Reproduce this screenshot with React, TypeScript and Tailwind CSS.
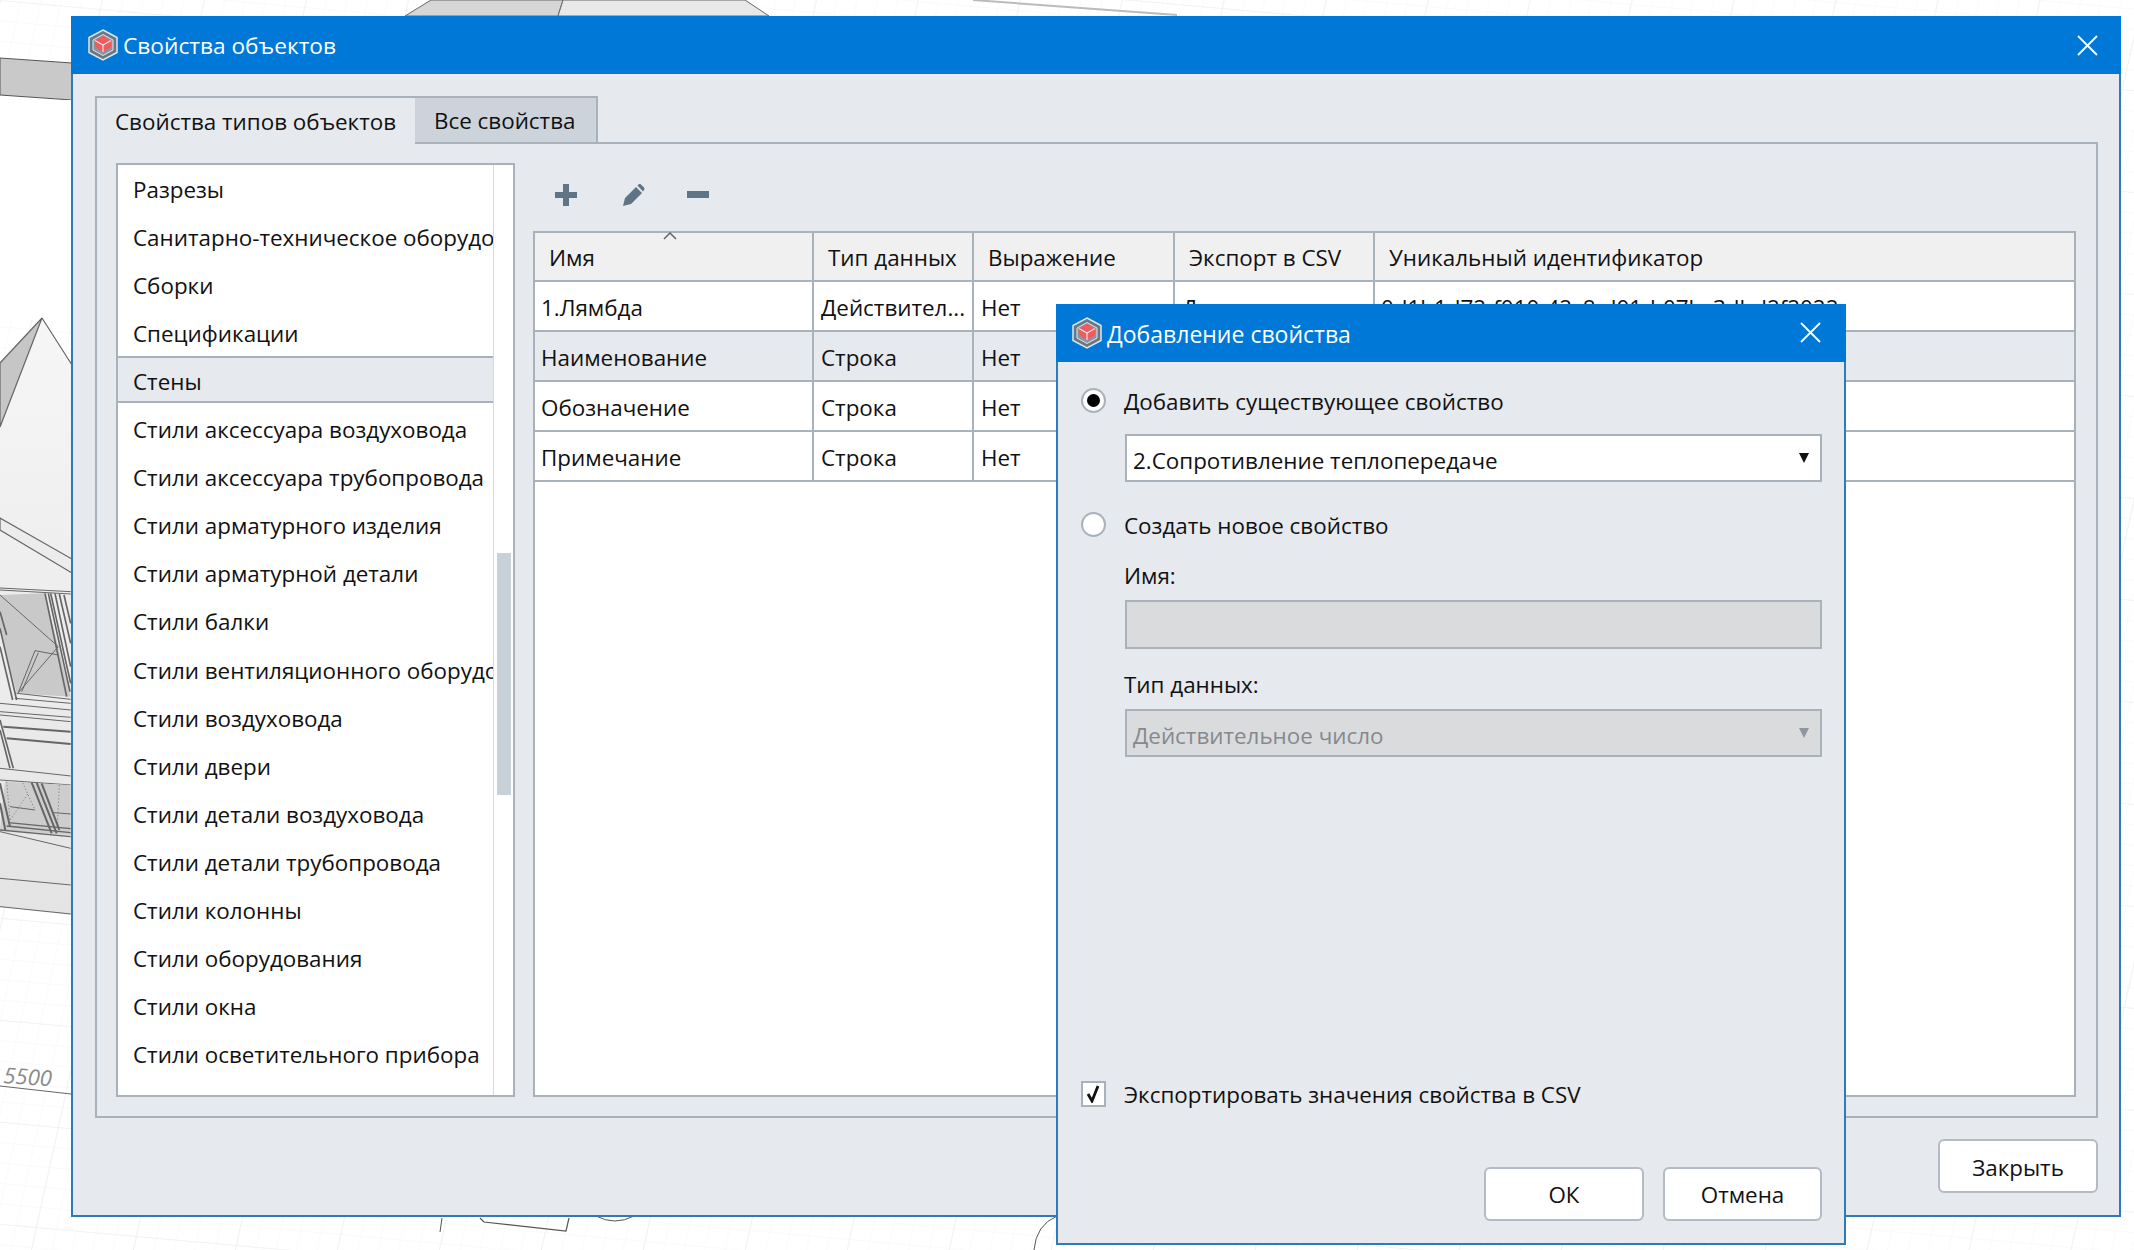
import React from "react";

const items = [
  "Разрезы",
  "Санитарно-техническое оборудование",
  "Сборки",
  "Спецификации",
  "Стены",
  "Стили аксессуара воздуховода",
  "Стили аксессуара трубопровода",
  "Стили арматурного изделия",
  "Стили арматурной детали",
  "Стили балки",
  "Стили вентиляционного оборудования",
  "Стили воздуховода",
  "Стили двери",
  "Стили детали воздуховода",
  "Стили детали трубопровода",
  "Стили колонны",
  "Стили оборудования",
  "Стили окна",
  "Стили осветительного прибора",
  "Стили панели",
];

const rows = [
  ["1.Лямбда", "Действител...", "Нет", "Да", "0d1b1d72-f010-42c8-d01d-07bc3dbd2f2022"],
  ["Наименование", "Строка", "Нет", "", ""],
  ["Обозначение", "Строка", "Нет", "", ""],
  ["Примечание", "Строка", "Нет", "", ""],
];

function Logo() {
  return (
    <svg width="30" height="32" viewBox="0 0 30 32" className="shrink-0">
      <polygon points="15,1 29,8.5 29,23.5 15,31 1,23.5 1,8.5" fill="#6b7784" stroke="#dfe6ec" strokeWidth="1.5" />
      <polygon points="15,5.5 25,11 25,21 15,26.5 5,21 5,11" fill="#8a94a0" stroke="#dfe6ec" strokeWidth="1" />
      <polygon points="15,7 23,11.5 23,18 15,23 7,18 7,11.5" fill="#f4595c" />
      <path d="M7 11.5 L15 16 L23 11.5 M15 16 V23" stroke="#dfe6ec" strokeWidth="1.2" fill="none" />
    </svg>
  );
}

function CloseX() {
  return (
    <svg width="21" height="21" viewBox="0 0 21 21">
      <path d="M1 1 L20 20 M20 1 L1 20" stroke="#fff" strokeWidth="1.8" fill="none" />
    </svg>
  );
}

function Background() {
  return (
    <svg className="absolute left-0 top-0" width="2134" height="1250" viewBox="0 0 2134 1250">
      <defs>
        <pattern id="minor" width="20" height="20" patternUnits="userSpaceOnUse" patternTransform="matrix(1 0.09 -0.22 1 0 0)">
          <path d="M20 0 H0 V20" fill="none" stroke="#f6f6f6" strokeWidth="1" />
        </pattern>
        <pattern id="major" width="100" height="100" patternUnits="userSpaceOnUse" patternTransform="matrix(1 0.09 -0.22 1 0 0)">
          <path d="M100 0 H0 V100" fill="none" stroke="#ececec" strokeWidth="1.2" />
        </pattern>
        <linearGradient id="roof" x1="0" y1="0" x2="0" y2="1">
          <stop offset="0" stopColor="#f6f6f6" />
          <stop offset="1" stopColor="#e4e4e4" />
        </linearGradient>
      </defs>
      <rect width="2134" height="1250" fill="#ffffff" />
      <rect width="2134" height="1250" fill="url(#minor)" />
      <rect width="2134" height="1250" fill="url(#major)" />

      <polygon points="405,16 431,0 563,0 558,16" fill="#d6d6d6" stroke="#666" strokeWidth="1" />
      <polygon points="558,16 563,0 745,0 769,16" fill="#e8e8e8" stroke="#666" strokeWidth="1" />
      <path d="M973 0 L1177 15" stroke="#bbb" strokeWidth="2" />

      <polygon points="0,58 72,63 72,100 0,95" fill="#c9c9c9" stroke="#555" strokeWidth="1" />

      <rect x="0" y="100" width="72" height="220" fill="#fff" />
      <polygon points="42,318 72,365 72,915 0,907 0,363" fill="url(#roof)" />
      <polygon points="42,318 0,363 0,427" fill="#c6c6c6" stroke="#666" strokeWidth="1.2" />
      <path d="M42 318 L72 365" stroke="#666" strokeWidth="1.2" />
      <polygon points="0,518 72,559 72,573 0,530" fill="#ececec" stroke="#666" strokeWidth="1.2" />

      <g transform="translate(0 540) scale(0.3333)" fill="none" stroke="#666" strokeWidth="3">
        <polygon points="0,144 212,158 212,500 0,490" fill="#ececec" stroke="none" />
        <polygon points="0,165 135,160 212,470 50,460 0,265" fill="#c9c9c9" stroke="none" />
        <path d="M0 144 L212 155 M0 150 L212 162" />
        <path d="M0 165 L175 320 M105 332 L175 345 M55 458 L105 332 M65 455 L115 338 M55 458 L175 320" />
        <path d="M135 160 L200 470 M145 160 L210 455 M152 160 L212 430 M165 160 L212 380 M178 162 L212 310 M192 165 L212 250" strokeWidth="5" />
        <path d="M0 265 L50 480 M0 215 L20 285 M0 320 L38 480" strokeWidth="5" />
        <path d="M50 460 L212 478 M45 475 L212 490 M0 490 L212 510 M0 515 L212 532 M0 525 L212 545" />
        <path d="M10 560 L212 575 M20 595 L212 612" strokeWidth="6" />
        <path d="M0 540 L40 685 M0 570 L30 685" strokeWidth="5" />
        <path d="M0 685 L212 708 M0 720 L212 735" />
        <polygon points="15,725 212,735 212,885 0,870" fill="#cdcdcd" stroke="none" />
        <path d="M95 728 L155 880 M110 728 L170 880 M125 730 L178 870" strokeWidth="6" />
        <path d="M0 730 L30 860 M0 790 L16 870" strokeWidth="6" />
        <path d="M20 725 L30 840 M68 728 L105 810 M30 840 L85 760 M178 735 L172 860" strokeDasharray="4 6" strokeWidth="2" />
        <path d="M30 800 L105 810 M160 818 L212 822" />
        <path d="M25 848 L212 866 M20 858 L212 878 M0 870 L212 890" strokeWidth="4" />
        <path d="M0 875 L212 925 M0 1015 L212 1035 M0 1100 L212 1122" />
      </g>

      <text x="3" y="1083" fontFamily="'Open Sans', sans-serif" fontStyle="italic" fontSize="22" fill="#8a8a8a" transform="rotate(4 3 1083)">5500</text>
      <path d="M0 1086 L71 1094" stroke="#666" strokeWidth="1" />

      <path d="M442 1218 L440 1232" stroke="#555" strokeWidth="1" />
      <path d="M480 1218 L484 1222 L566 1231 L569 1218" stroke="#555" strokeWidth="1.2" fill="none" />
      <path d="M596 1216 Q615 1226 634 1216" stroke="#555" strokeWidth="1" fill="none" />
      <path d="M1057 1216 Q1036 1225 1034 1250" stroke="#555" strokeWidth="1" fill="none" />
    </svg>
  );
}

export default function App() {
  return (
    <div className="relative w-[2134px] h-[1250px] overflow-hidden bg-white font-['Open_Sans',sans-serif] text-[22.4px] text-[#111]">
      <Background />

      {/* Main window */}
      <div className="absolute left-[71px] top-[16px] w-[2050px] h-[1201px] flex flex-col bg-[#e6e9ed] border-x-2 border-b-2 border-[#2e7bb9]">
        <div className="h-[58px] shrink-0 -mx-[2px] bg-[#0078d7] flex items-center pl-[17px] pr-[23px] text-white">
          <Logo />
          <span className="ml-[5px] pt-[3px] text-[22.7px]">Свойства объектов</span>
          <span className="ml-auto flex"><CloseX /></span>
        </div>

        <div className="flex-1 flex flex-col pt-[22px] pl-[22px] pr-[21px] min-h-0">
          <div className="flex h-[48px] -mb-[2px] relative z-10">
            <div className="w-[320px] border-l-2 border-t-2 border-[#a9b2bb] bg-[#e6e9ed] pl-[18px] pt-[2px] flex items-center">Свойства типов объектов</div>
            <div className="w-[183px] border-2 border-l-0 border-[#a9b2bb] bg-[#ccd3da] pl-[19px] pt-[2px] flex items-center">Все свойства</div>
          </div>

          <div className="h-[976px] border-2 border-[#a9b2bb] flex pt-[19px] pl-[19px] pr-[20px] pb-[19px] gap-[18px]">
            {/* List */}
            <div className="w-[399px] shrink-0 border-2 border-[#a9b2bb] bg-white flex overflow-hidden">
              <div className="w-[375px] shrink-0 overflow-hidden">
                {items.map((t, i) => (
                  <div
                    key={t}
                    className={
                      i === 4
                        ? "h-[47px] -mt-[1px] mb-[2.08px] pt-[4px] border-y-2 border-[#a9b2bb] bg-[#e6e9ed] pl-[15px] flex items-center whitespace-nowrap overflow-hidden"
                        : "h-[48.08px] pl-[15px] pt-[1px] flex items-center whitespace-nowrap overflow-hidden"
                    }
                  >
                    {t}
                  </div>
                ))}
              </div>
              <div className="flex-1 border-l border-[#d5dade] pl-[3px] pt-[388px]">
                <div className="w-[14px] h-[242px] bg-[#c8d0d8]" />
              </div>
            </div>

            {/* Right column */}
            <div className="flex-1 min-w-0 flex flex-col">
              <div className="h-[68px] shrink-0 flex items-center pl-[22px] pb-[4px]">
                <svg width="22" height="22" viewBox="0 0 22 22">
                  <path d="M8 0 H14 V8 H22 V14 H14 V22 H8 V14 H0 V8 H8 Z" fill="#5f7487" />
                </svg>
                <svg width="22" height="22" viewBox="0 0 22 22" className="ml-[46px]">
                  <path d="M0 22 L2 14 L13 3 L19 9 L8 20 Z M14.5 1.5 L16 0 Q17 -0.5 18 0.5 L21 3.5 Q22 4.5 21 6 L20 7.5 Z" fill="#5f7487" />
                </svg>
                <svg width="22" height="8" viewBox="0 0 22 8" className="ml-[42px]">
                  <rect width="22" height="7" fill="#5f7487" />
                </svg>
              </div>

              <div className="flex-1 border-2 border-[#a9b2bb] bg-white">
                <div className="flex h-[49px] bg-[#f0f0f0] border-b-2 border-[#a9b2bb] text-[#111]">
                  <div className="relative w-[279px] shrink-0 border-r-2 border-[#a9b2bb] pl-[14px] pt-[3px] flex items-center">
                    Имя
                    <svg width="14" height="8" viewBox="0 0 14 8" className="absolute left-[128px] top-[-1px]">
                      <path d="M1 7 L7 1 L13 7" stroke="#666" strokeWidth="1.5" fill="none" />
                    </svg>
                  </div>
                  <div className="w-[160px] shrink-0 border-r-2 border-[#a9b2bb] pl-[14px] pt-[3px] flex items-center">Тип данных</div>
                  <div className="w-[201px] shrink-0 border-r-2 border-[#a9b2bb] pl-[14px] pt-[3px] flex items-center">Выражение</div>
                  <div className="w-[200px] shrink-0 border-r-2 border-[#a9b2bb] pl-[14px] pt-[3px] flex items-center">Экспорт в CSV</div>
                  <div className="flex-1 pl-[14px] pt-[3px] flex items-center">Уникальный идентификатор</div>
                </div>
                {rows.map((r, i) => (
                  <div key={r[0]} className={i === 1 ? "flex h-[50px] bg-[#e6e9ed] border-b-2 border-[#a9b2bb]" : "flex h-[50px] border-b-2 border-[#a9b2bb]"}>
                    <div className="w-[279px] shrink-0 border-r-2 border-[#a9b2bb] pl-[6px] pt-[3px] flex items-center">{r[0]}</div>
                    <div className="w-[160px] shrink-0 border-r-2 border-[#a9b2bb] pl-[7px] pt-[3px] flex items-center whitespace-nowrap overflow-hidden">{r[1]}</div>
                    <div className="w-[201px] shrink-0 border-r-2 border-[#a9b2bb] pl-[7px] pt-[3px] flex items-center">{r[2]}</div>
                    <div className="w-[200px] shrink-0 border-r-2 border-[#a9b2bb] pl-[7px] pt-[3px] flex items-center">{r[3]}</div>
                    <div className="flex-1 pl-[6px] pt-[3px] flex items-center whitespace-nowrap overflow-hidden">{r[4]}</div>
                  </div>
                ))}
              </div>
            </div>
          </div>

          <div className="flex justify-end pt-[21px]">
            <button className="w-[160px] h-[54px] bg-white border-2 border-[#b4bbc2] rounded-[6px] pt-[3px] flex items-center justify-center">Закрыть</button>
          </div>
        </div>
      </div>

      {/* Dialog */}
      <div className="absolute left-[1056px] top-[304px] w-[790px] h-[941px] flex flex-col bg-[#e6e9ed] border-x-2 border-b-2 border-[#2e7bb9]">
        <div className="h-[58px] shrink-0 -mx-[2px] bg-[#0078d7] flex items-center pl-[16px] pr-[25px] text-white">
          <Logo />
          <span className="ml-[5px] pt-[2px] text-[23px]">Добавление свойства</span>
          <span className="ml-auto flex -mt-[2px]"><CloseX /></span>
        </div>

        <div className="flex-1 flex flex-col pt-[26px] pl-[23px] pr-[22px] pb-[22px] min-h-0">
          <div className="h-[25px] flex items-center gap-[18px]">
            <div className="w-[25px] h-[25px] rounded-full bg-white border-2 border-[#a9b2bb] flex items-center justify-center shrink-0">
              <div className="w-[13px] h-[13px] rounded-full bg-black" />
            </div>
            <span className="pt-[2px]">Добавить существующее свойство</span>
          </div>

          <div className="mt-[21px] ml-[44px] h-[48px] bg-white border-2 border-[#a9b2bb] flex items-center pl-[6px] pr-[11px]">
            <span className="pt-[6px]">2.Сопротивление теплопередаче</span>
            <svg width="10" height="10" viewBox="0 0 10 10" className="ml-auto"><polygon points="0,0 10,0 5,10" fill="#111" /></svg>
          </div>

          <div className="mt-[30px] h-[25px] flex items-center gap-[18px]">
            <div className="w-[25px] h-[25px] rounded-full bg-white border-2 border-[#a9b2bb] shrink-0" />
            <span className="pt-[3px]">Создать новое свойство</span>
          </div>

          <div className="mt-[22px] ml-[43px] h-[32px] pt-[2px] flex items-center">Имя:</div>
          <div className="mt-[9px] ml-[44px] h-[49px] bg-[#d9dbdd] border-2 border-[#a9b2bb]" />
          <div className="mt-[21px] ml-[43px] h-[32px] pb-[3px] flex items-center">Тип данных:</div>
          <div className="mt-[7px] ml-[44px] h-[48px] bg-[#d9dbdd] border-2 border-[#a9b2bb] flex items-center pl-[6px] pr-[11px] text-[#85898e]">
            <span className="pt-[5px]">Действительное число</span>
            <svg width="10" height="10" viewBox="0 0 10 10" className="ml-auto"><polygon points="0,0 10,0 5,10" fill="#8f969d" /></svg>
          </div>

          <div className="mt-auto h-[26px] flex items-center gap-[18px] mb-[60px]">
            <div className="w-[25px] h-[26px] bg-white border-2 border-[#a9b2bb] flex items-center justify-center shrink-0">
              <svg width="15" height="18" viewBox="0 0 15 18"><path d="M2 9 L6 16 L12 1" stroke="#111" strokeWidth="2.8" fill="none" /></svg>
            </div>
            <span className="pt-[1px]">Экспортировать значения свойства в CSV</span>
          </div>

          <div className="flex justify-end gap-[19px]">
            <button className="w-[160px] h-[54px] bg-white border-2 border-[#b4bbc2] rounded-[6px] pt-[2px] flex items-center justify-center">ОК</button>
            <button className="w-[159px] h-[54px] bg-white border-2 border-[#b4bbc2] rounded-[6px] pt-[2px] flex items-center justify-center">Отмена</button>
          </div>
        </div>
      </div>
    </div>
  );
}
